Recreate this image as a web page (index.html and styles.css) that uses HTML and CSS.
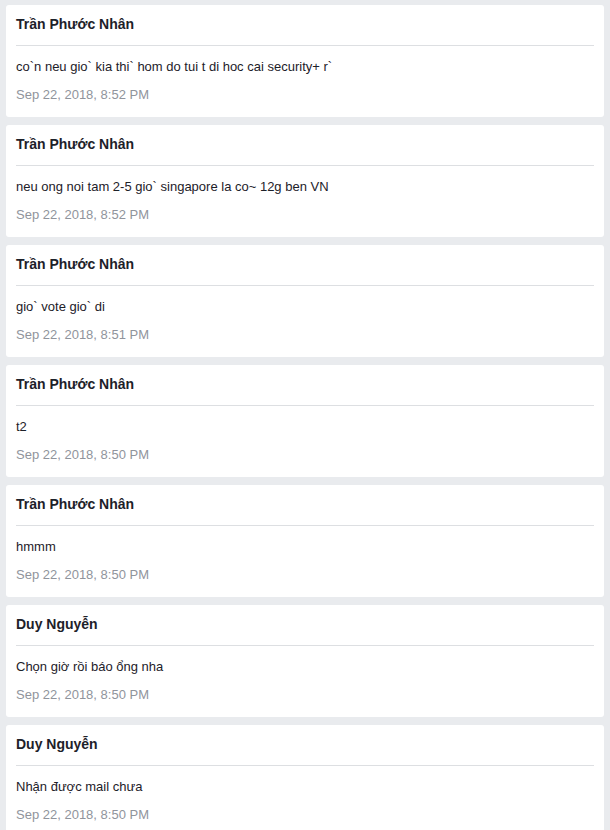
FILE: index.html
```html
<!DOCTYPE html>
<html lang="vi">
<head>
<meta charset="utf-8">
<link rel="stylesheet" href="styles.css">
</head>
<body>
<div class="list">
  <div class="card">
    <div class="name">Trần Phước Nhân</div>
    <div class="msg">co`n neu gio` kia thi` hom do tui t di hoc cai security+ r`</div>
    <div class="time">Sep 22, 2018, 8:52 PM</div>
  </div>
  <div class="card">
    <div class="name">Trần Phước Nhân</div>
    <div class="msg">neu ong noi tam 2-5 gio` singapore la co~ 12g ben VN</div>
    <div class="time">Sep 22, 2018, 8:52 PM</div>
  </div>
  <div class="card">
    <div class="name">Trần Phước Nhân</div>
    <div class="msg">gio` vote gio` di</div>
    <div class="time">Sep 22, 2018, 8:51 PM</div>
  </div>
  <div class="card">
    <div class="name">Trần Phước Nhân</div>
    <div class="msg">t2</div>
    <div class="time">Sep 22, 2018, 8:50 PM</div>
  </div>
  <div class="card">
    <div class="name">Trần Phước Nhân</div>
    <div class="msg">hmmm</div>
    <div class="time">Sep 22, 2018, 8:50 PM</div>
  </div>
  <div class="card">
    <div class="name">Duy Nguyễn</div>
    <div class="msg">Chọn giờ rồi báo ổng nha</div>
    <div class="time">Sep 22, 2018, 8:50 PM</div>
  </div>
  <div class="card">
    <div class="name">Duy Nguyễn</div>
    <div class="msg">Nhận được mail chưa</div>
    <div class="time">Sep 22, 2018, 8:50 PM</div>
  </div>
</div>
</body>
</html>
```

FILE: styles.css
```css
html, body {
  margin: 0;
  padding: 0;
  background: #e9ebee;
  font-family: "Liberation Sans", Arial, sans-serif;
}
.list {
  display: flex;
  flex-direction: column;
  gap: 8px;
  padding: 5px 6px;
}
.card {
  background: #fff;
  border-radius: 3px;
  padding: 0 10px;
  height: 112px;
  box-sizing: border-box;
}
.name {
  font-size: 14px;
  font-weight: bold;
  color: #1d2129;
  line-height: 16px;
  padding: 11px 0 13px;
  border-bottom: 1px solid #dddfe2;
}
.msg {
  font-size: 13px;
  color: #1d2129;
  line-height: 15px;
  margin-top: 13px;
}
.time {
  font-size: 13px;
  color: #90949c;
  line-height: 15px;
  margin-top: 13px;
}
```
